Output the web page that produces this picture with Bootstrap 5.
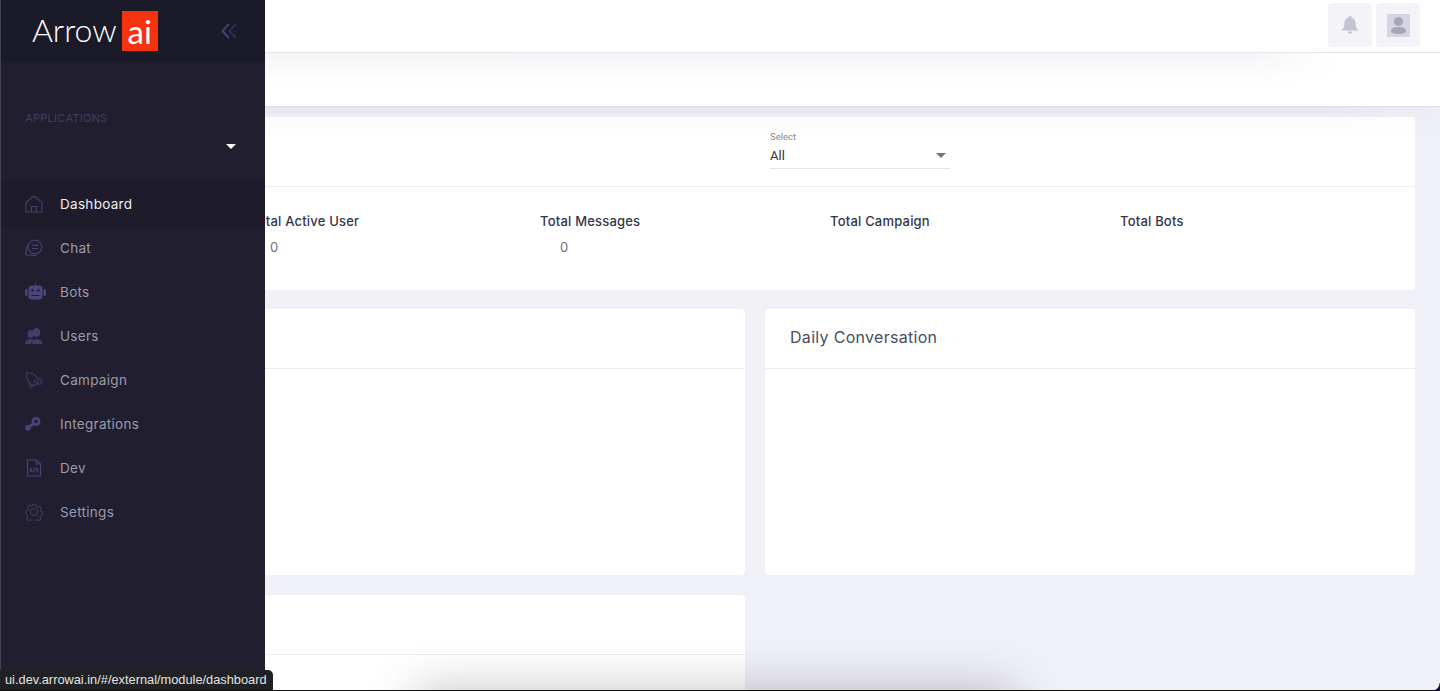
<!DOCTYPE html>
<html lang="en">
<head>
    <meta charset="UTF-8">
    <title>Dashboard</title>
    <link href="https://cdn.jsdelivr.net/npm/bootstrap@5.3.0/dist/css/bootstrap.min.css" rel="stylesheet">
    <style>
        html, body { height: 100%; overflow: hidden; }
        body { background: #f0f1f7; font-family: "Inter", "Liberation Sans", sans-serif; color: #3f4254; }

        .page-wrap { height: 691px; overflow: hidden; position: relative; }

        /* top bars */
        .top-bar { height: 53px; background: #fff; border-bottom: 1px solid #e6e6ee; padding: 3px 20px 0 0; }
        .top-btn { width: 44px; height: 44px; background: #f3f3f8; border-radius: 4px; }
        .avatar-box { width: 23px; height: 23px; background: #d3d6e2; }
        .sub-bar { height: 54px; background: #fff; border-bottom: 1px solid #e0e0ea; }

        /* content */
        .main-area { padding: 10px 25px 0 95px; }
        .panel-box { background: #fff; border: 0; border-radius: 4px; }
        .filter-head { height: 70px; border-bottom: 1px solid #ebedf3; padding: 14px 0 0 675px; }
        .select-wrap { width: 180px; height: 38px; border-bottom: 1px solid #e6e6ee; font-family: "Roboto", sans-serif; }
        .select-label { font-size: 9.5px; line-height: 12px; color: #8a8a8a; }
        .select-value { font-size: 13px; line-height: 26px; color: #333; }
        .select-caret { width: 0; height: 0; border-left: 5.5px solid transparent; border-right: 5.5px solid transparent; border-top: 5.5px solid #757575; margin: 10px 4px 0 0; }
        .stats-grid { display: grid; grid-template-columns: repeat(4, 290px); height: 103px; padding: 25px 0 0 155px; }
        .stat-title { font-size: 13px; font-weight: 500; line-height: 18px; letter-spacing: .2px; color: #33364a; white-space: nowrap; }
        .stat-num { font-size: 13px; line-height: 18px; color: #6c6c90; padding: 8px 0 0 20px; }
        .chart-grid { display: grid; grid-template-columns: 650px 650px; gap: 20px; padding-top: 19px; }
        .chart-box { height: 266px; }
        .chart-head { height: 60px; border-bottom: 1px solid #ebedf3; padding: 17px 25px 0; font-size: 16px; line-height: 22px; letter-spacing: .3px; color: #464e5f; }

        /* side menu lies over the page */
        .side-menu { position: absolute; left: 0; top: 0; bottom: 0; width: 265px; background: #201e2f; border-left: 1px solid #45435a; z-index: 5; }
        .brand-row { height: 63px; background: #1b1a28; padding: 11px 26px 0 31px; }
        .brand-word { font-family: "Lato", sans-serif; font-weight: 300; font-size: 32px; line-height: 38px; color: #fff; }
        .brand-tag { width: 36px; height: 40px; background: #f6330f; color: #fff; font-family: "Lato", sans-serif; font-weight: 400; font-size: 33px; line-height: 40px; text-align: center; margin-left: 5px; }
        .fold-icon { margin-top: 12px; }
        .apps-label { font-size: 11px; line-height: 14px; letter-spacing: .3px; color: #403e60; padding: 48px 0 0 24px; }
        .apps-select { height: 57px; padding: 19px 29px 0 0; }
        .apps-caret { width: 0; height: 0; border-left: 5px solid transparent; border-right: 5px solid transparent; border-top: 5px solid #fff; }
        .menu-row { height: 44px; padding-left: 24px; gap: 17px; font-size: 13.5px; color: #9c9aab; letter-spacing: .3px; text-decoration: none; }
        .menu-row:hover { color: #9c9aab; }
        .menu-row.is-current { background: #1e1c2b; color: #eeeef2; }
        .menu-row svg { flex: none; }

        /* browser link preview and soft shadows */
        .link-preview { position: absolute; left: 0; bottom: 1px; z-index: 9; background: #202124; color: #e3e3e3; font-family: "Liberation Sans", sans-serif; font-size: 12.8px; line-height: 20px; padding: 0 6px 0 5px; border-radius: 0 5px 0 0; white-space: nowrap; }
        .glow-top { position: absolute; left: 265px; top: 53px; width: 1075px; height: 32px; background: linear-gradient(rgba(70, 60, 100, .05), rgba(70, 60, 100, 0)); -webkit-mask-image: linear-gradient(90deg, #000 92%, transparent); z-index: 3; }
        .glow-mid { position: absolute; left: 265px; right: 0; top: 107px; height: 33px; background: linear-gradient(rgba(60, 50, 90, .055), rgba(60, 50, 90, .02) 35%, rgba(60, 50, 90, 0)); -webkit-mask-image: linear-gradient(90deg, #000 90%, rgba(0, 0, 0, .3)); z-index: 3; }
        .glow-bottom { position: absolute; left: 415px; top: 690px; width: 600px; height: 60px; box-shadow: 0 0 50px rgba(0, 0, 0, .24); z-index: 3; }
        .screen-edge { position: absolute; left: 0; right: 0; bottom: 0; height: 1px; background: #111; z-index: 10; }
        .screen-corner { position: absolute; right: 0; bottom: 0; width: 8px; height: 8px; background: radial-gradient(circle at 0 0, transparent 7px, #15132b 8px); z-index: 10; }
    </style>
</head>
<body>
<div class="page-wrap">
    <aside class="side-menu">
        <div class="brand-row d-flex justify-content-between">
            <div class="d-flex">
                <span class="brand-word">Arrow</span>
                <span class="brand-tag">ai</span>
            </div>
            <svg class="fold-icon" width="18" height="16" viewBox="0 0 18 16" fill="none" stroke-width="2">
                <path d="M8 1 1.500 8 8 15" stroke="#46426e"/>
                <path d="M15 1 8.500 8 15 15" stroke="#2f2d4a"/>
            </svg>
        </div>
        <div class="apps-label">APPLICATIONS</div>
        <div class="apps-select d-flex justify-content-end"><span class="apps-caret"></span></div>
        <nav class="d-flex flex-column">
            <a class="menu-row is-current d-flex align-items-center" href="#">
                <svg width="18" height="18" viewBox="0 0 18 18" fill="none" stroke="#3d4266" stroke-width="1.200"><path d="M1 7.500 9 1l8 6.500V17H1z"/><path d="M6.500 17v-5.500h5V17"/></svg>
                <span>Dashboard</span>
            </a>
            <a class="menu-row d-flex align-items-center" href="#">
                <svg width="18" height="18" viewBox="0 0 18 18" fill="none" stroke="#44406a" stroke-width="1.200"><circle cx="10" cy="8" r="6.800"/><path d="M7 6.300h6M7 9.500h6"/><path d="M3.400 5.500C1.800 7 1 9 1 11.500V16h5.500l1.500.8 3.500-.8"/></svg>
                <span>Chat</span>
            </a>
            <a class="menu-row d-flex align-items-center" href="#">
                <svg width="21" height="18" viewBox="0 0 21 18" fill="#4a4679" style="margin-right:-3px"><path d="M10 0h1v2.500h-1z"/><rect x="3.500" y="2.500" width="14" height="14" rx="3"/><rect x="0" y="6" width="2.500" height="7" rx="1"/><rect x="18.500" y="6" width="2.500" height="7" rx="1"/><circle cx="7.500" cy="7.500" r="1.200" fill="#201e2f"/><circle cx="13.500" cy="7.500" r="1.200" fill="#201e2f"/><path fill="#201e2f" d="M6.500 12h8v1h-8z"/></svg>
                <span>Bots</span>
            </a>
            <a class="menu-row d-flex align-items-center" href="#">
                <svg width="18" height="16" viewBox="0 0 18 16" fill="#3e4068"><ellipse cx="11.500" cy="4.500" rx="3.800" ry="4.500"/><path d="M7 16c0-2 .5-3.500 2-4.300l1-.5h3l2 .8c1.800.7 2.500 2 2.500 4z"/><ellipse cx="5.500" cy="6" rx="3" ry="4"/><path d="M0 16c0-2.500 1-3.500 3-4.200l1.500-.6h3l1 .8C7 13 6 14.500 6 16z"/></svg>
                <span>Users</span>
            </a>
            <a class="menu-row d-flex align-items-center" href="#">
                <svg width="18" height="18" viewBox="0 0 18 18" fill="none" stroke="#3f3c63" stroke-width="1.200"><path d="M1.500 1.500c5 0 9 2.500 11 6 1 2 .8 4-.2 5.500l-3 1.500c-2 0-3.500-1-5-2.500C2.500 10 1.500 6 1.500 1.500z"/><path d="M12.500 7.500l4.500 1-1.500 4.500-2.500-.2M4.500 11.500l1 5 3.800-2"/><circle cx="9.500" cy="10" r=".6"/><circle cx="11" cy="12" r=".4"/></svg>
                <span>Campaign</span>
            </a>
            <a class="menu-row d-flex align-items-center" href="#">
                <svg width="16" height="14" viewBox="0 0 16 14" fill="#47447a" style="margin-right:2px"><path fill-rule="evenodd" d="M11 0a4.500 4.500 0 1 1 0 9 4.500 4.500 0 0 1 0-9zm0 2.700a1.800 1.800 0 1 0 0 3.600 1.800 1.800 0 0 0 0-3.600z"/><path d="M7 6 9 8.500 5.500 10.500 4 8z"/><circle cx="3" cy="10.800" r="3"/></svg>
                <span>Integrations</span>
            </a>
            <a class="menu-row d-flex align-items-center" href="#">
                <svg width="18" height="18" viewBox="0 0 18 18" fill="none" stroke="#47447a" stroke-width="1.200"><path d="M2.500 1h9l4 4v12h-13z"/><path d="M11.500 1v4h4"/><path d="M7 9l-2 2 2 2M11 9l2 2-2 2M9.800 8.500 8.200 13.500"/></svg>
                <span>Dev</span>
            </a>
            <a class="menu-row d-flex align-items-center" href="#">
                <svg width="18" height="18" viewBox="0 0 18 18" fill="none" stroke="#3d3b5c" stroke-width="1.100"><circle cx="9" cy="9" r="3.500"/><path d="M7.500 1h3l.5 2.300 1.800.8 2-1.200 2 2.100-1.200 2 .7 1.700 2 .6v3l-2.200.5-.7 1.700 1.200 2-2 2-2-1.200-1.800.8-.5 2.100h-3l-.5-2.100-1.800-.8-2 1.200-2-2 1.200-2-.7-1.700L.5 11V8l2-.6.700-1.700-1.200-2 2-2.100 2 1.200 1.800-.8z" transform="scale(.94) translate(.5 .3)"/></svg>
                <span>Settings</span>
            </a>
        </nav>
    </aside>

    <header class="top-bar d-flex justify-content-end gap-1">
        <div class="top-btn d-flex align-items-center justify-content-center">
            <svg width="16" height="18" viewBox="0 0 16 18" fill="#c3c5d3"><path d="M8 0c1 0 1.500.6 1.500 1.400C12 2 13.500 4 13.500 7c0 3.500.8 5 2.500 6.700V14.500H0v-.8C1.700 12 2.500 10.500 2.500 7 2.500 4 4 2 6.500 1.400 6.500.6 7 0 8 0z"/><path d="M5.800 15.500h4.400C10 17 9 17.700 8 17.700S6 17 5.800 15.500z"/></svg>
        </div>
        <div class="top-btn d-flex align-items-center justify-content-center">
            <div class="avatar-box d-flex align-items-center justify-content-center">
                <svg width="15" height="17" viewBox="0 0 15 17" fill="#a5a7b8"><circle cx="7.500" cy="4.500" r="4.500"/><path d="M0 14c0-3 3-4 7.500-4s7.500 1 7.500 4c0 2-3 3-7.500 3S0 16 0 14z"/></svg>
            </div>
        </div>
    </header>
    <div class="sub-bar"></div>

    <main class="main-area">
        <section class="panel-box card">
            <div class="filter-head">
                <div class="select-wrap">
                    <div class="select-label">Select</div>
                    <div class="d-flex justify-content-between">
                        <span class="select-value">All</span>
                        <span class="select-caret"></span>
                    </div>
                </div>
            </div>
            <div class="stats-grid">
                <div><div class="stat-title">Total Active User</div><div class="stat-num">0</div></div>
                <div><div class="stat-title">Total Messages</div><div class="stat-num">0</div></div>
                <div><div class="stat-title">Total Campaign</div></div>
                <div><div class="stat-title">Total Bots</div></div>
            </div>
        </section>
        <div class="chart-grid">
            <section class="panel-box card chart-box"><div class="chart-head"></div></section>
            <section class="panel-box card chart-box"><div class="chart-head">Daily Conversation</div></section>
            <section class="panel-box card chart-box"><div class="chart-head"></div></section>
        </div>
    </main>

    <div class="glow-top"></div>
    <div class="glow-mid"></div>
    <div class="glow-bottom"></div>
    <div class="link-preview">ui.dev.arrowai.in/#/external/module/dashboard</div>
    <div class="screen-edge"></div>
    <div class="screen-corner"></div>
</div>
<script src="https://cdn.jsdelivr.net/npm/bootstrap@5.3.0/dist/js/bootstrap.bundle.min.js"></script>
</body>
</html>
